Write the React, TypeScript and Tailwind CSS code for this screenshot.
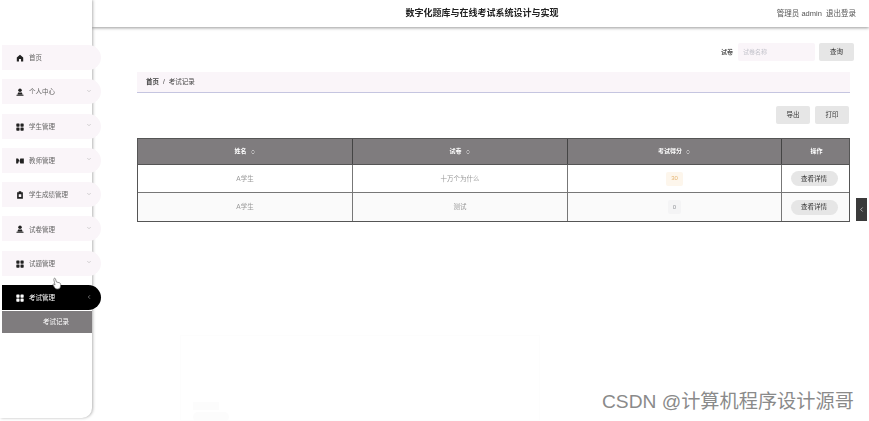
import { ChevronDown, ChevronLeft, ChevronsUpDown } from "lucide-react";
import type { ReactNode } from "react";

const cjk = "font-['Liberation_Sans','Noto_Sans_CJK_SC',sans-serif]";

function HomeIcon() {
  return (
    <svg width="8" height="8" viewBox="0 0 10 10" fill="currentColor">
      <path d="M5 .8 1 4.400v5h2.700V6.400h2.600v3H9v-5z" />
    </svg>
  );
}

function UserIcon() {
  return (
    <svg width="8" height="8" viewBox="0 0 10 10" fill="currentColor">
      <circle cx="5" cy="2.800" r="2.200" />
      <path d="M2.600 5.600h4.800l.8 2.400H1.800zM.6 8.400h8.800v1.200H.6z" />
    </svg>
  );
}

function GridIcon() {
  return (
    <svg width="8" height="8" viewBox="0 0 10 10" fill="currentColor">
      <rect x=".4" y=".6" width="4" height="4" rx=".8" />
      <rect x="5.600" y=".6" width="4" height="4" rx=".8" />
      <rect x=".4" y="5.600" width="4" height="4" rx=".8" />
      <rect x="5.600" y="5.600" width="4" height="4" rx=".8" />
    </svg>
  );
}

function CameraIcon() {
  return (
    <svg width="8" height="8" viewBox="0 0 10 10" fill="currentColor">
      <path d="M.2 1.800h2.400L4 4 2.600 8.200H.2zM9.800 1.800H5.400L4.400 5l1 3.200h4.400z" />
    </svg>
  );
}

function ClipboardIcon() {
  return (
    <svg width="8" height="8" viewBox="0 0 10 10" fill="currentColor">
      <path d="M3.400.4h3.200v1.200h2v8H1.400v-8h2zM3.400 4v3.600h3.200V4z" />
    </svg>
  );
}

function SortIcon() {
  return <ChevronsUpDown size={6} strokeWidth={2.500} className="ml-[3px] opacity-80" />;
}

function MenuItem({ icon, label, arrow = true }: { icon: ReactNode; label: string; arrow?: boolean }) {
  return (
    <div className="ml-[2px] mb-[9.300px] flex h-[25px] w-[99px] items-center rounded-r-full bg-[#faf5f9] pl-[14px] pr-[9px] pt-px text-[#666]">
      <span className="flex w-[13px] text-[#222]">{icon}</span>
      <span className="text-[6.500px]">{label}</span>
      {arrow && <ChevronDown size={6} className="ml-auto -mt-[3px] text-[#aaa]" />}
    </div>
  );
}

const rows = [
  { name: "A学生", paper: "十万个为什么", score: "30", tag: "bg-[#fdf6ec] text-[#e6b674] w-[17px]", bg: "bg-white" },
  { name: "A学生", paper: "测试", score: "0", tag: "bg-[#f4f4f5] text-[#909399] w-[13px]", bg: "bg-[#fafafa]" },
];

const cols = "grid grid-cols-[215px_215px_214px_69px]";

export default function App() {
  return (
    <div className={`relative h-[421px] w-[869px] overflow-hidden bg-white ${cjk}`}>
      <div className="flex h-full w-full blur-[0.4px]">
        <aside className="relative z-10 h-[418px] w-[92px] shrink-0 rounded-br-[10px] bg-white pt-[45px] shadow-[1px_0_3px_rgba(0,0,0,0.3)]">
          <MenuItem icon={<HomeIcon />} label="首页" arrow={false} />
          <MenuItem icon={<UserIcon />} label="个人中心" />
          <MenuItem icon={<GridIcon />} label="学生管理" />
          <MenuItem icon={<CameraIcon />} label="教师管理" />
          <MenuItem icon={<ClipboardIcon />} label="学生成绩管理" />
          <MenuItem icon={<UserIcon />} label="试卷管理" />
          <MenuItem icon={<GridIcon />} label="试题管理" />
          <div className="ml-[2px] flex h-[25px] w-[99px] items-center rounded-r-full bg-black pl-[14px] pr-[9px] pt-px text-white">
            <span className="flex w-[13px]"><GridIcon /></span>
            <span className="text-[6.500px]">考试管理</span>
            <ChevronLeft size={6} className="ml-auto -mt-[3px] text-[#ccc]" />
          </div>
          <div className="ml-[2px] mt-[1px] flex h-[22px] w-[90px] items-center bg-[#7f7c7e] pl-[41px] text-[6.500px] text-white">
            考试记录
          </div>
        </aside>

        <main className="min-w-0 flex-1">
          <header className="flex h-[27px] items-center justify-between bg-white pr-[13px] shadow-[0_1px_3px_rgba(0,0,0,0.4)]">
            <div className="ml-[160px] w-[460px] pt-px text-center text-[9px] font-bold text-[#222]">
              数字化题库与在线考试系统设计与实现
            </div>
            <div className="whitespace-nowrap pt-px text-[7.500px] text-[#555]">管理员 admin&nbsp;&nbsp;退出登录</div>
          </header>

          <div className="pl-[45px] pr-[19px]">
            <div className="mt-[16px] flex h-[18px] items-center justify-end -mr-[4px]">
              <span className="mr-[5px] text-[6px] font-bold text-[#555]">试卷</span>
              <div className="flex h-[18px] w-[77px] items-center rounded-[2px] bg-[#faf5f9] pl-[5px] text-[6px] text-[#c4c4cc]">
                试卷名称
              </div>
              <button className="ml-[4px] h-[18px] w-[35px] rounded-[2px] bg-[#e6e6e6] text-[6.500px] text-[#333]">查询</button>
            </div>

            <div className="mt-[11px] flex h-[21px] items-center border-b border-[#c5c5e0] bg-[#faf5f9] pl-[9px] text-[6.500px] text-[#444]">
              <span className="font-bold">首页</span>
              <span className="mx-[4px]">/</span>
              <span>考试记录</span>
            </div>

            <div className="mt-[13px] flex justify-end gap-[5px] pr-px">
              <button className="h-[18px] w-[34px] rounded-[2px] bg-[#e6e6e6] text-[6.500px] text-[#333]">导出</button>
              <button className="h-[18px] w-[34px] rounded-[2px] bg-[#e6e6e6] text-[6.500px] text-[#333]">打印</button>
            </div>

            <div className="mt-[14px] border border-[#555]">
              <div className={`${cols} h-[26px] border-b border-[#555] bg-[#7f7c7e] text-[6px] font-bold text-white`}>
                <div className="flex items-center justify-center border-r border-[#444]">姓名<SortIcon /></div>
                <div className="flex items-center justify-center border-r border-[#444]">试卷<SortIcon /></div>
                <div className="flex items-center justify-center border-r border-[#444]">考试得分<SortIcon /></div>
                <div className="flex items-center justify-center">操作</div>
              </div>
              {rows.map((r, i) => (
                <div key={i} className={`${cols} h-[28px] ${r.bg} text-[6.500px] text-[#999] ${i === 0 ? "border-b border-[#777]" : ""}`}>
                  <div className="flex items-center justify-center border-r border-[#777]">{r.name}</div>
                  <div className="flex items-center justify-center border-r border-[#777]">{r.paper}</div>
                  <div className="flex items-center justify-center border-r border-[#777]">
                    <span className={`flex h-[14px] items-center justify-center rounded-[2px] text-[6px] ${r.tag}`}>{r.score}</span>
                  </div>
                  <div className="flex items-center justify-center pr-[5px]">
                    <button className="h-[15px] w-[47px] rounded-full bg-[#e6e6e6] text-[6.500px] text-[#333]">查看详情</button>
                  </div>
                </div>
              ))}
            </div>
          </div>
        </main>
      </div>

      <div className="absolute left-[856px] top-[198px] flex h-[23px] w-[11px] items-center justify-center bg-[#3a3a3a] text-white">
        <ChevronLeft size={7} />
      </div>

      {/* faint ghost of the page behind */}
      <div className="absolute left-[180px] top-[335px] h-[86px] w-[360px] border border-[#fdfdfd]">
        <div className="absolute left-[12px] top-[66px] h-[8px] w-[26px] bg-[#fcfcfc]" />
        <div className="absolute left-[12px] top-[76px] h-[10px] w-[36px] rounded-full bg-[#fcfcfc]" />
      </div>

      {/* mouse pointer */}
      <svg className="absolute left-[52px] top-[277px] z-20" width="10" height="13" viewBox="0 0 10 13">
        <path d="M2 1.500c.7-.6 1.300-.2 1.500.5L4.400 5l2.800.7c1 .3 1.600 1 1.500 2L8.300 10c-.2 1.200-1.200 2-2.400 2H4.800c-.9 0-1.500-.5-2-1.200L1 8c-.4-.7.400-1.300 1-.8l1 .9L1.800 2.500C1.700 2.100 1.700 1.800 2 1.500z" fill="#fff" stroke="#666" strokeWidth=".7" />
      </svg>

      <div className="absolute left-[602px] top-[389px] z-20 text-[19.200px] leading-[26px] text-[#8a8a8a]">
        CSDN @计算机程序设计源哥
      </div>
    </div>
  );
}
